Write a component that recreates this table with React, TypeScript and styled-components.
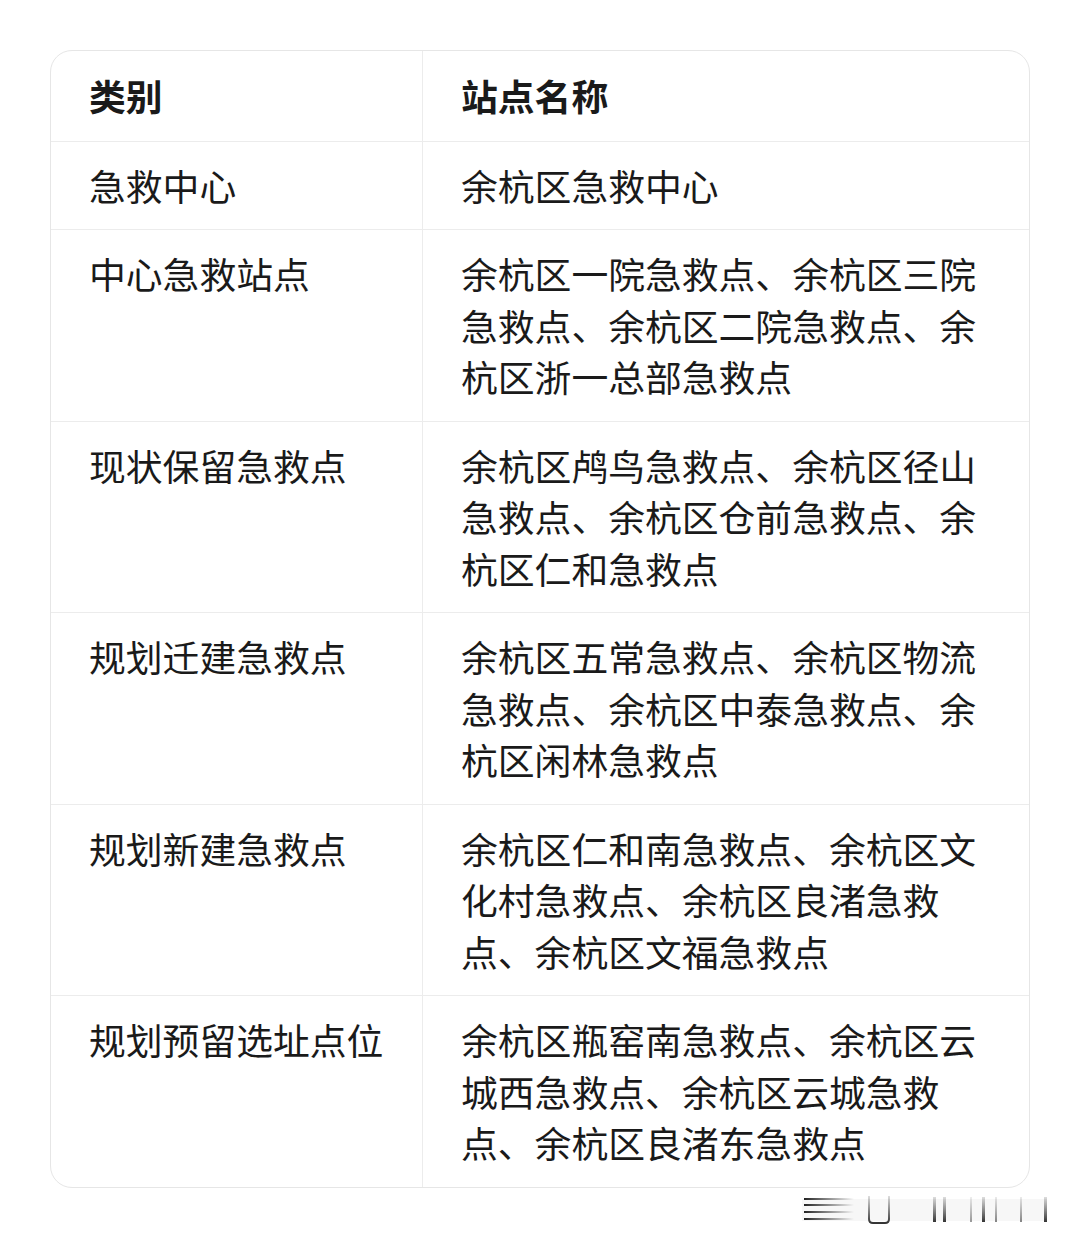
import styled, { createGlobalStyle } from "styled-components"

const GlobalStyle = createGlobalStyle`
  html, body {
    margin: 0;
    padding: 0;
    background: #ffffff;
  }
  body {
    font-family: "Noto Sans CJK SC", "Noto Sans", sans-serif;
    color: #1a1a1a;
  }
`

const Page = styled.div`
  width: 1080px;
  height: 1245px;
  padding: 50px 50px 0 50px;
  box-sizing: border-box;
`

const Table = styled.div`
  border: 1.5px solid #e6e6e6;
  border-radius: 22px;
  overflow: hidden;
  display: grid;
  grid-template-columns: 371px 1fr;
`

const Cell = styled.div<{ $head?: boolean; $right?: boolean; $first?: boolean }>`
  padding: ${(p) => (p.$head ? "19px" : "18px")} ${(p) => (p.$right ? "40px" : "16px")} ${(p) =>
      p.$head ? "19px" : "18px"} 38px;
  font-size: 36.8px;
  line-height: 51.5px;
  font-weight: ${(p) => (p.$head ? 700 : 400)};
  border-top: ${(p) => (p.$first ? "none" : "1.5px solid #ececec")};
  border-left: ${(p) => (p.$right ? "1.5px solid #ececec" : "none")};
  white-space: ${(p) => (p.$right ? "normal" : "nowrap")};
`

const Footer = styled.div`
  display: flex;
  justify-content: flex-end;
  padding-top: 6px;
  margin-right: -22px;
`

const rows: [string, string][] = [
  ["急救中心", "余杭区急救中心"],
  ["中心急救站点", "余杭区一院急救点、余杭区三院急救点、余杭区二院急救点、余杭区浙一总部急救点"],
  ["现状保留急救点", "余杭区鸬鸟急救点、余杭区径山急救点、余杭区仓前急救点、余杭区仁和急救点"],
  ["规划迁建急救点", "余杭区五常急救点、余杭区物流急救点、余杭区中泰急救点、余杭区闲林急救点"],
  ["规划新建急救点", "余杭区仁和南急救点、余杭区文化村急救点、余杭区良渚急救点、余杭区文福急救点"],
  ["规划预留选址点位", "余杭区瓶窑南急救点、余杭区云城西急救点、余杭区云城急救点、余杭区良渚东急救点"],
]

const Watermark = () => (
  <svg width="250" height="32" viewBox="0 0 250 32">
    <defs>
      <linearGradient id="h" x1="0" x2="1" y1="0" y2="0">
        <stop offset="0" stopColor="#222" />
        <stop offset="1" stopColor="#222" stopOpacity="0" />
      </linearGradient>
      <linearGradient id="v" x1="0" x2="0" y1="0" y2="1">
        <stop offset="0" stopColor="#555" stopOpacity="0.2" />
        <stop offset="1" stopColor="#333" />
      </linearGradient>
    </defs>
    <rect x="0" y="5" width="245" height="22" fill="#f2f2f2" opacity="0.6" />
    <rect x="2" y="4" width="50" height="2" fill="url(#h)" />
    <rect x="2" y="10" width="50" height="2" fill="url(#h)" />
    <rect x="2" y="17" width="50" height="2" fill="url(#h)" />
    <rect x="2" y="24" width="50" height="2" fill="url(#h)" />
    <path d="M67 2 V25 Q67 29 71 29 H83 Q87 29 87 25 V2" fill="none" stroke="url(#v)" strokeWidth="2" />
    <rect x="131" y="3" width="3" height="25" fill="url(#v)" />
    <rect x="141" y="3" width="3" height="25" fill="url(#v)" />
    <rect x="168" y="3" width="2" height="25" fill="url(#v)" opacity="0.5" />
    <rect x="180" y="3" width="3" height="25" fill="url(#v)" />
    <rect x="193" y="3" width="2" height="25" fill="url(#v)" opacity="0.6" />
    <rect x="218" y="3" width="2" height="25" fill="url(#v)" opacity="0.6" />
    <rect x="242" y="3" width="3" height="25" fill="url(#v)" />
  </svg>
)

export default function App() {
  return (
    <>
      <GlobalStyle />
      <Page>
        <Table>
          <Cell $head $first>类别</Cell>
          <Cell $head $first $right>站点名称</Cell>
          {rows.map(([kind, names]) => (
            <>
              <Cell key={kind + "a"}>{kind}</Cell>
              <Cell key={kind + "b"} $right>{names}</Cell>
            </>
          ))}
        </Table>
        <Footer>
          <Watermark />
        </Footer>
      </Page>
    </>
  )
}
